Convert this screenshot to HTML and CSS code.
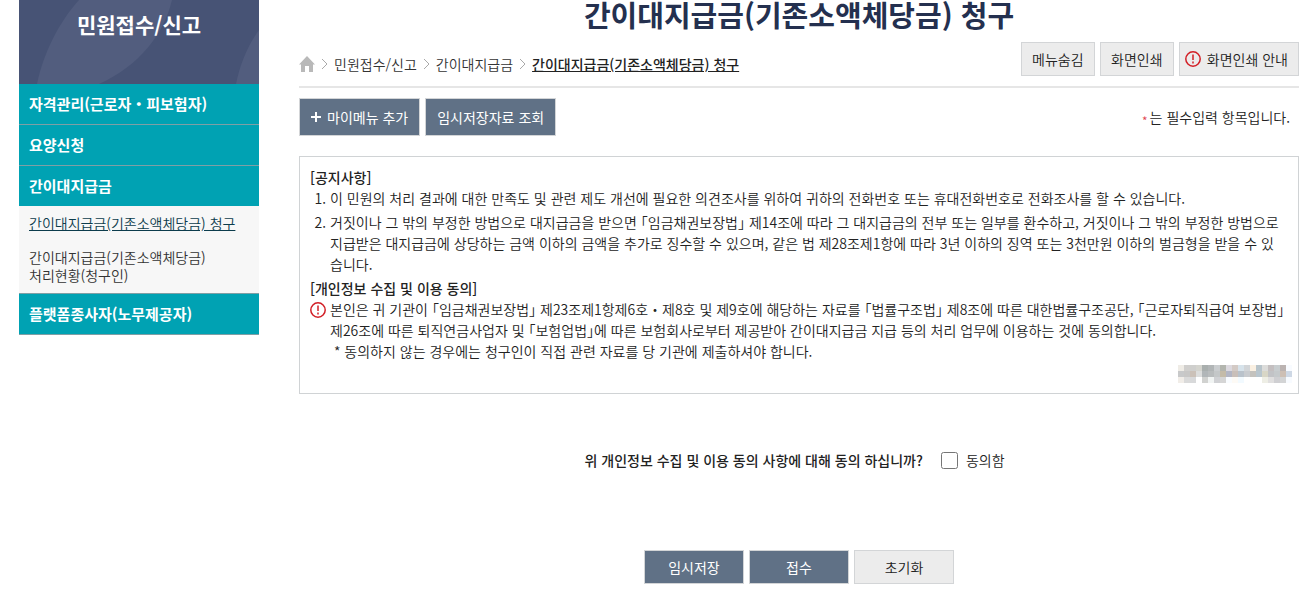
FILE: index.html
```html
<!DOCTYPE html>
<html lang="ko">
<head>
  <meta charset="UTF-8">
  <title>간이대지급금(기존소액체당금) 청구</title>
  <link rel="stylesheet" href="styles.css">
</head>
<body>

<div class="wrap">

  <aside class="lnb">
    <h2 class="lnb-title">
      <svg class="lnb-bg" viewBox="0 0 240 84" preserveAspectRatio="none" aria-hidden="true">
        <path d="M18 84C24 54 40 22 60 0H153C145 34 120 66 80 84Z"/>
        <path d="M217 84C221 64 229 45 240 30V84Z"/>
      </svg>
      <span>민원접수/신고</span>
    </h2>
    <ul class="menu">
      <li><a class="menu-link" href="#">자격관리(근로자・피보험자)</a></li>
      <li><a class="menu-link" href="#">요양신청</a></li>
      <li>
        <a class="menu-link open" href="#">간이대지급금</a>
        <ul class="submenu">
          <li><a class="on" href="#">간이대지급금(기존소액체당금) 청구</a></li>
          <li><a href="#">간이대지급금(기존소액체당금)<br>처리현황(청구인)</a></li>
        </ul>
      </li>
      <li><a class="menu-link" href="#">플랫폼종사자(노무제공자)</a></li>
    </ul>
  </aside>

  <main class="content">
    <h1>간이대지급금(기존소액체당금) 청구</h1>

    <div class="location">
      <nav class="path">
        <a href="#" aria-label="홈">
          <svg class="home" width="16" height="16" viewBox="0 0 16 16"><path d="M8 0L16 8.500H14V16H10V10H6V16H2V8.500H0Z"/></svg>
        </a>
        <svg class="arrow" width="7" height="12" viewBox="0 0 7 12"><path d="M1 1L6 6L1 11"/></svg>
        <a href="#">민원접수/신고</a>
        <svg class="arrow" width="7" height="12" viewBox="0 0 7 12"><path d="M1 1L6 6L1 11"/></svg>
        <a href="#">간이대지급금</a>
        <svg class="arrow" width="7" height="12" viewBox="0 0 7 12"><path d="M1 1L6 6L1 11"/></svg>
        <a class="current" href="#">간이대지급금(기존소액체당금) 청구</a>
      </nav>
      <div class="btns">
        <button type="button" class="btn">메뉴숨김</button>
        <button type="button" class="btn">화면인쇄</button>
        <button type="button" class="btn btn-guide">
          <svg class="alert" width="16" height="16" viewBox="0 0 16 16"><circle cx="8" cy="8" r="7.200"/><path d="M8 3.500V9M8 10.500V12.500"/></svg>
          화면인쇄 안내
        </button>
      </div>
    </div>

    <div class="tools">
      <div class="btns">
        <button type="button" class="btn btn-dark btn-tall">
          <svg class="plus" width="10" height="10" viewBox="0 0 10 10"><path d="M5 0V10M0 5H10"/></svg>
          마이메뉴 추가
        </button>
        <button type="button" class="btn btn-dark btn-tall">임시저장자료 조회</button>
      </div>
      <p class="required"><em>*</em>는 필수입력 항목입니다.</p>
    </div>

    <section class="notice">
      <h3>[공지사항]</h3>
      <ol>
        <li>이 민원의 처리 결과에 대한 만족도 및 관련 제도 개선에 필요한 의견조사를 위하여 귀하의 전화번호 또는 휴대전화번호로 전화조사를 할 수 있습니다.</li>
        <li>거짓이나 그 밖의 부정한 방법으로 대지급금을 받으면 「임금채권보장법」 제14조에 따라 그 대지급금의 전부 또는 일부를 환수하고, 거짓이나 그 밖의 부정한 방법으로 지급받은 대지급금에 상당하는 금액 이하의 금액을 추가로 징수할 수 있으며, 같은 법 제28조제1항에 따라 3년 이하의 징역 또는 3천만원 이하의 벌금형을 받을 수 있습니다.</li>
      </ol>
      <h3>[개인정보 수집 및 이용 동의]</h3>
      <div class="agree-text">
        <svg class="alert" width="16" height="16" viewBox="0 0 16 16"><circle cx="8" cy="8" r="7.200"/><path d="M8 3.500V9M8 10.500V12.500"/></svg>
        <div>
          <p>본인은 귀 기관이 「임금채권보장법」 제23조제1항제6호<span class="dot">・</span>제8호 및 제9호에 해당하는 자료를 「법률구조법」 제8조에 따른 대한법률구조공단, 「근로자퇴직급여 보장법」 제26조에 따른 퇴직연금사업자 및 「보험업법」에 따른 보험회사로부터 제공받아 간이대지급금 지급 등의 처리 업무에 이용하는 것에 동의합니다.</p>
          <p class="sub">* 동의하지 않는 경우에는 청구인이 직접 관련 자료를 당 기관에 제출하셔야 합니다.</p>
        </div>
      </div>
      <!-- 신청인 정보 가림 처리 -->
      <svg class="mask" width="114" height="18" viewBox="0 0 19 3" shape-rendering="crispEdges" aria-hidden="true">
        <g id="mask"></g>
      </svg>
    </section>

    <div class="confirm">
      <strong>위 개인정보 수집 및 이용 동의 사항에 대해 동의 하십니까?</strong>
      <input type="checkbox" id="agree">
      <label for="agree">동의함</label>
    </div>

    <div class="btns btns-bottom">
      <button type="button" class="btn btn-dark btn-wide">임시저장</button>
      <button type="button" class="btn btn-dark btn-wide">접수</button>
      <button type="reset" class="btn btn-wide">초기화</button>
    </div>
  </main>

</div>

<script src="mask.js"></script>
</body>
</html>
```
FILE: styles.css
```css
* {
  box-sizing: border-box;
}
body, h1, h2, h3, p, ul, ol {
  margin: 0;
  padding: 0;
}
body {
  font-family: "Noto Sans CJK KR", sans-serif;
  font-size: 14px;
  font-weight: 350;
  line-height: 21px;
  color: #222;
  background: #fff;
}
ul {
  list-style: none;
}
a {
  color: #333;
  text-decoration: none;
}
svg {
  flex: none;
}
.wrap {
  display: flex;
  align-items: flex-start;
  gap: 40px;
  padding: 0 13px 19px 19px;
}

/* 왼쪽 메뉴 */
.lnb {
  flex: none;
  width: 240px;
}
.lnb-title {
  position: relative;
  height: 84px;
  padding-top: 8px;
  background: #475375;
  color: #fff;
  font-size: 21px;
  line-height: 32px;
  text-align: center;
}
.lnb-title span {
  position: relative;
}
.lnb-bg {
  position: absolute;
  top: 0;
  left: 0;
  width: 100%;
  height: 100%;
  fill: #525d7e;
}
.menu-link {
  display: block;
  padding: 0 10px;
  border-bottom: 1px solid #7f9fa5;
  background: #00a2b3;
  color: #fff;
  font-size: 15px;
  font-weight: bold;
  line-height: 40px;
}
.menu-link.open {
  border-bottom: 0;
}
.submenu {
  display: flex;
  flex-direction: column;
  gap: 16px;
  padding: 8px 10px 9px;
  border-bottom: 1px solid #7f9fa5;
  background: #f7f7f7;
  line-height: 18px;
}
.submenu .on {
  color: #0c3c4c;
  text-decoration: underline;
}

/* 본문 */
.content {
  flex: 1;
  min-width: 0;
}
h1 {
  color: #24304f;
  font-size: 29px;
  font-weight: bold;
  line-height: 28px;
  text-align: center;
}
.location {
  display: flex;
  justify-content: space-between;
  padding: 14px 0 10px;
  border-bottom: 2px solid #e6e6e6;
}
.path {
  display: flex;
  align-items: center;
  gap: 6px;
  padding-top: 10px;
}
.path .current {
  color: #222;
  font-weight: 500;
  text-decoration: underline;
}
.home {
  display: block;
  fill: #b9b9b9;
}
.arrow {
  fill: none;
  stroke: #aaa;
}
.btns {
  display: flex;
  gap: 5px;
}
.btn {
  display: flex;
  align-items: center;
  justify-content: center;
  gap: 6px;
  min-width: 74px;
  height: 34px;
  padding: 0 10px;
  border: 1px solid #d3d5d7;
  background: #ececec;
  color: #222;
  font-family: inherit;
  font-size: 14px;
  font-weight: inherit;
  cursor: pointer;
}
.btn-guide {
  padding-left: 5px;
}
.btn-dark {
  background: #607186;
  color: #fff;
  font-weight: 400;
}
.btn-tall {
  height: 38px;
  padding: 0 11px;
}
.btn-wide {
  width: 100px;
}
.plus {
  fill: none;
  stroke: #fff;
  stroke-width: 2;
}
.alert {
  fill: none;
  stroke: #d21f26;
  stroke-width: 1.5;
}
.tools {
  display: flex;
  align-items: center;
  justify-content: space-between;
  padding: 10px 0 20px;
}
.required {
  padding-right: 9px;
}
.required em {
  margin-right: 2px;
  color: #e0444c;
  font-size: 12px;
  font-style: normal;
  vertical-align: -3px;
  line-height: 12px;
}
.notice {
  padding: 10px;
  border: 1px solid #d0d3d5;
  font-feature-settings: "halt";
}
.notice .dot {
  font-feature-settings: normal;
}
.notice h3 {
  font-size: 14px;
  font-weight: 500;
}
.notice ol {
  padding: 0 6px 0 20px;
}
.notice ol li {
  margin-bottom: 3px;
}
.agree-text {
  display: flex;
  gap: 4px;
}
.agree-text .alert {
  margin-top: 3px;
}
.agree-text .sub {
  padding-left: 4px;
}
.mask {
  display: block;
  margin: 3px -4px 0 auto;
}
.confirm {
  display: flex;
  align-items: center;
  justify-content: center;
  gap: 8px;
  padding: 56px 9px 0 0;
}
.confirm strong {
  font-weight: 500;
}
.confirm input {
  width: 17px;
  height: 17px;
  margin: 0 0 0 10px;
}
.btns-bottom {
  justify-content: center;
  margin-top: 79px;
}
```
FILE: mask.js
```js
// 3줄 x 19칸 모자이크 색상
const rows = [
  "efece6 d0cfcd cfcfcd d4d4ce a9afae b1b5b6 cacdcf b3b5ae dcd9df d3cac5 d7e3eb d2d5d8 faf0e2 b8c4ca dcdcda c4bfc0 c8cdcf bbb3b1 f8fbff",
  "c8c9ca c8c7c6 cbc1b8 dcdddc b1b6b8 b9bcbd c4c7c8 c4bba8 b3b6c4 c9bfb9 b9c2cb c8cbcf c4c2bd b9c6ce d8d6c6 c2c3c6 c5c9cb cdbfb4 ced8e5",
  "f1ede8 dadada d8d9da ffffff d1d2d0 f1f4f3 d0d1d4 d5d5d5 f9fcff fdfaf5 f2faff ffffff ffffff ffffff eeeee5 e0dfdf cfcfd2 d3d4d5 f8fbff"
];

const mask = document.getElementById("mask");
rows.forEach((row, y) => {
  row.split(" ").forEach((color, x) => {
    const rect = document.createElementNS("http://www.w3.org/2000/svg", "rect");
    rect.setAttribute("x", x);
    rect.setAttribute("y", y);
    rect.setAttribute("width", 1);
    rect.setAttribute("height", 1);
    rect.setAttribute("fill", "#" + color);
    mask.appendChild(rect);
  });
});
```
